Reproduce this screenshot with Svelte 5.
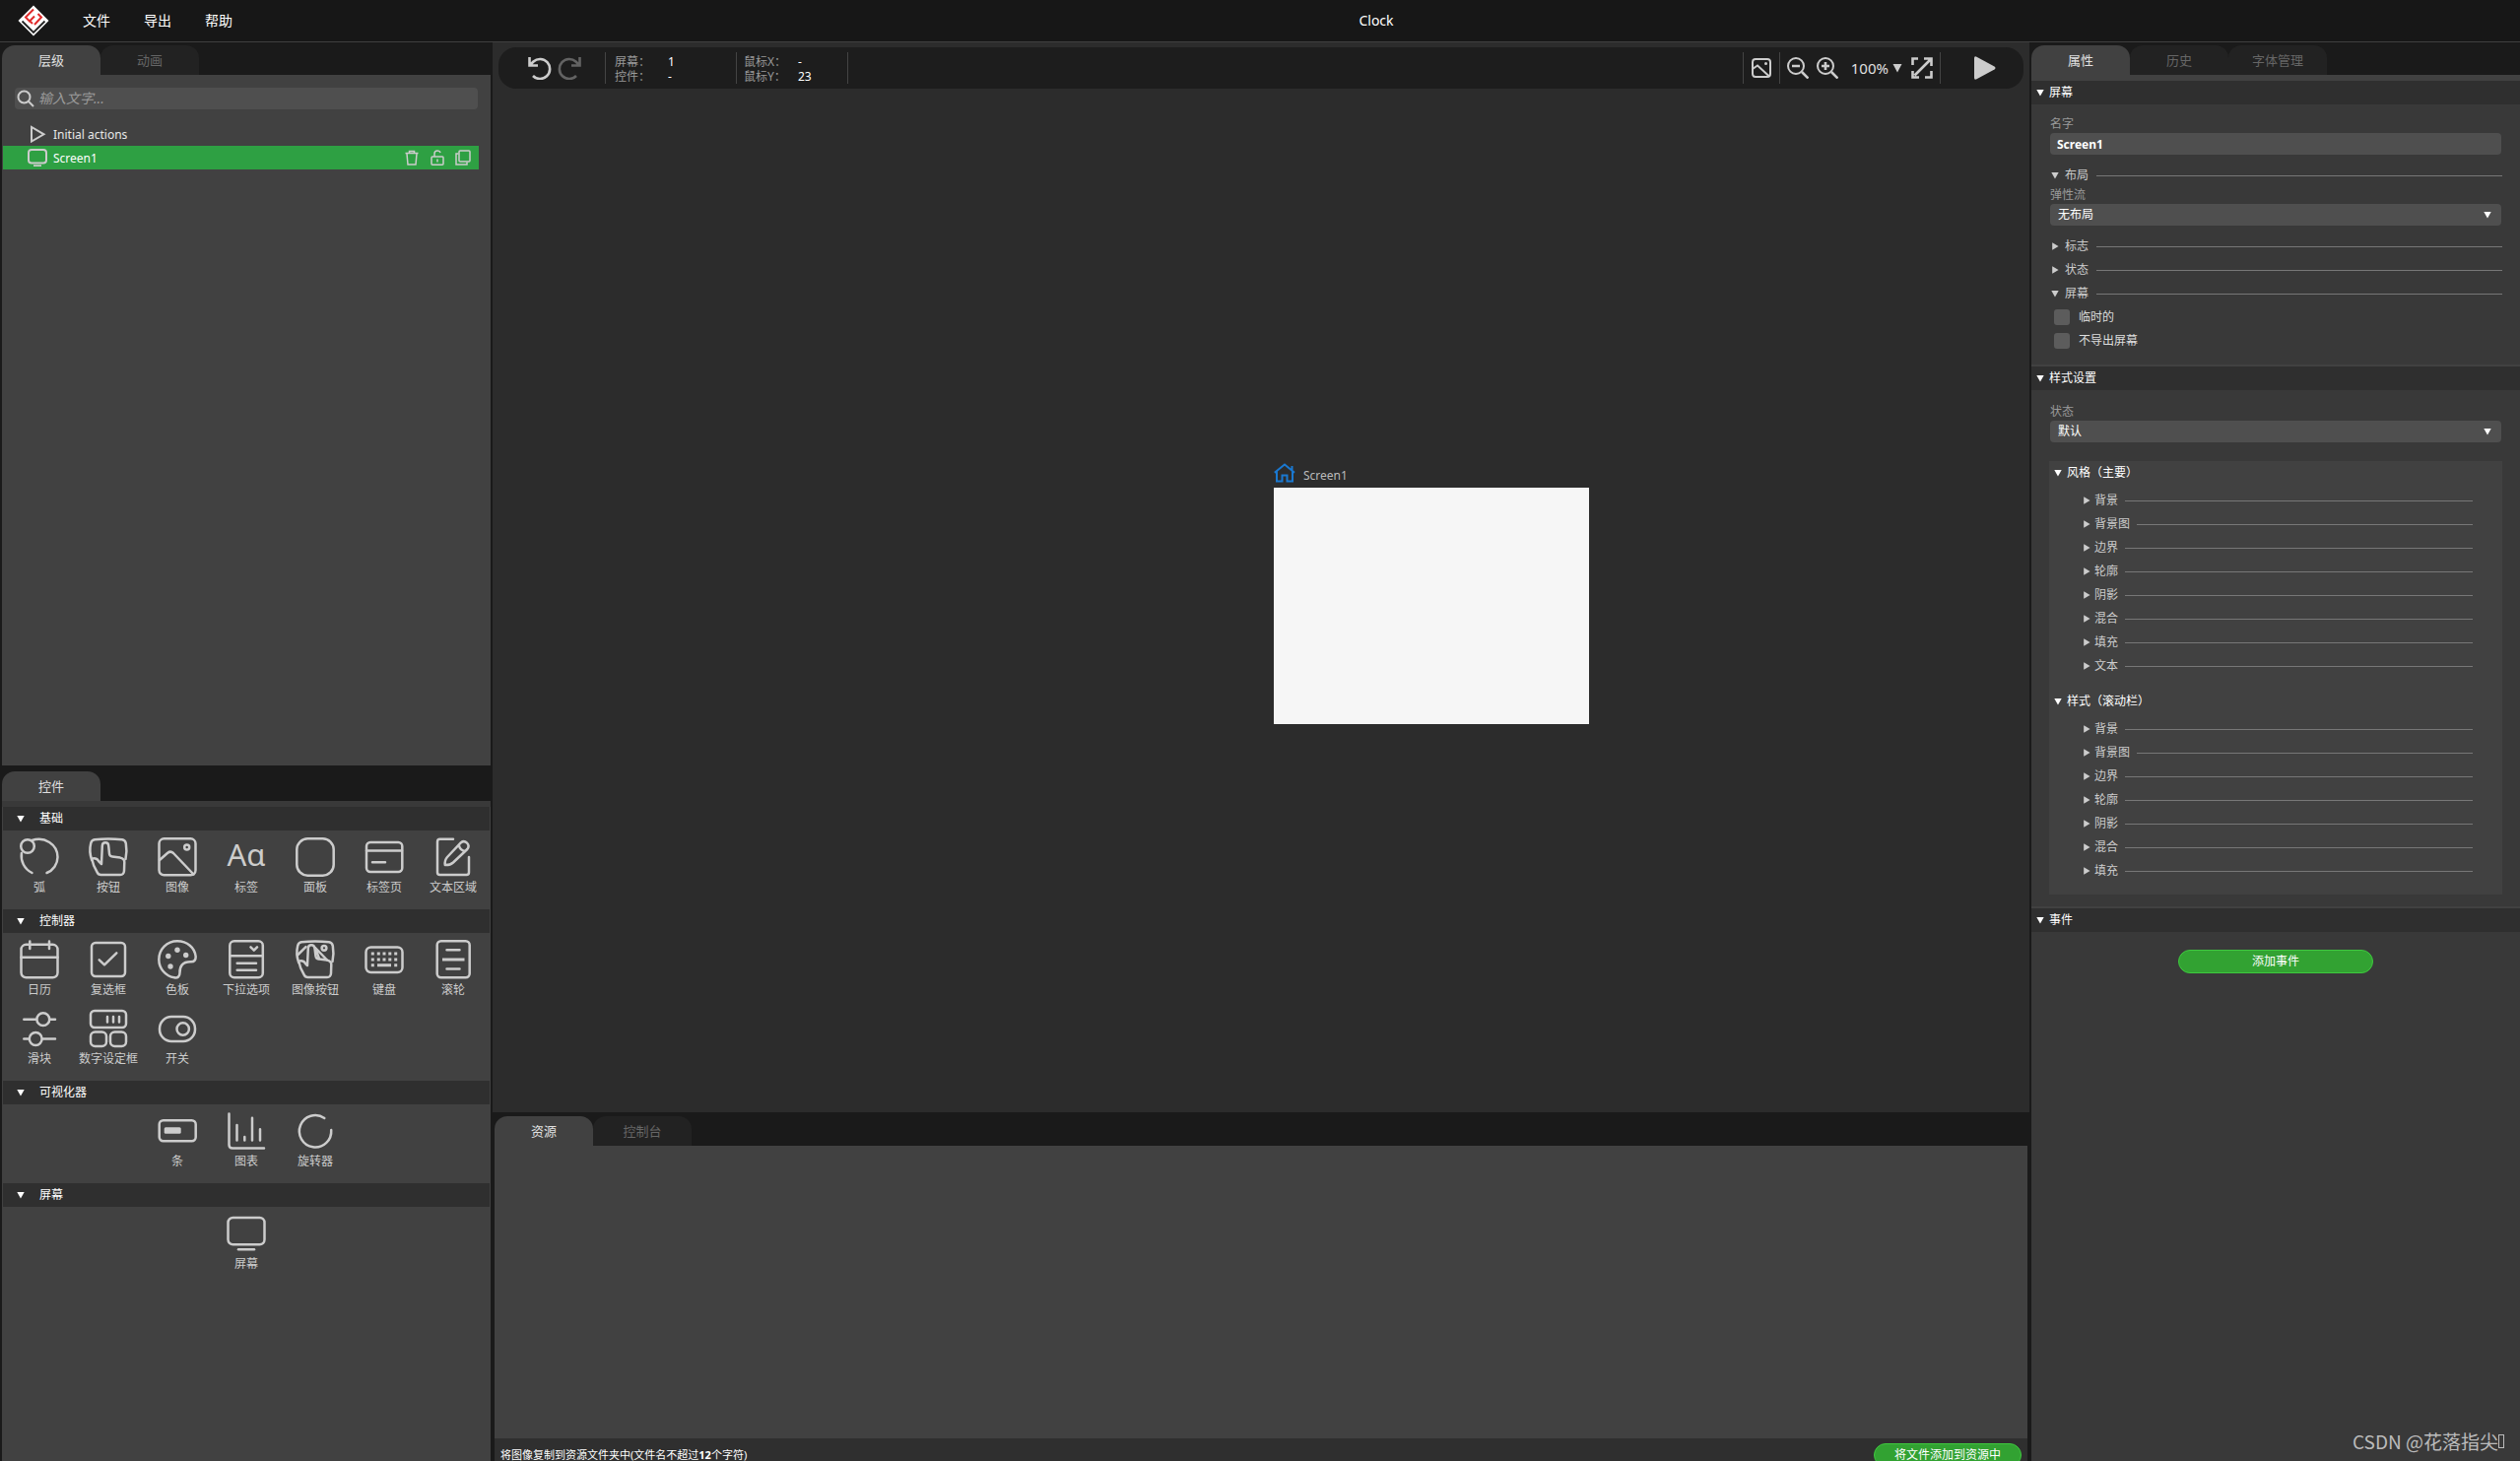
<script lang="ts">
	type Widget = { icon: string; label: string };
	type Group = { title: string; widgets: Widget[] };

	const menus = ['文件', '导出', '帮助'];

	const groups: Group[] = [
		{
			title: '基础',
			widgets: [
				{ icon: 'arc', label: '弧' },
				{ icon: 'button', label: '按钮' },
				{ icon: 'image', label: '图像' },
				{ icon: 'label', label: '标签' },
				{ icon: 'panel', label: '面板' },
				{ icon: 'tabview', label: '标签页' },
				{ icon: 'textarea', label: '文本区域' }
			]
		},
		{
			title: '控制器',
			widgets: [
				{ icon: 'calendar', label: '日历' },
				{ icon: 'checkbox', label: '复选框' },
				{ icon: 'palette', label: '色板' },
				{ icon: 'dropdown', label: '下拉选项' },
				{ icon: 'imgbutton', label: '图像按钮' },
				{ icon: 'keyboard', label: '键盘' },
				{ icon: 'roller', label: '滚轮' },
				{ icon: 'slider', label: '滑块' },
				{ icon: 'spinbox', label: '数字设定框' },
				{ icon: 'switch', label: '开关' }
			]
		},
		{
			title: '可视化器',
			widgets: [
				{ icon: 'bar', label: '条' },
				{ icon: 'chart', label: '图表' },
				{ icon: 'spinner', label: '旋转器' }
			]
		},
		{ title: '屏幕', widgets: [{ icon: 'screen', label: '屏幕' }] }
	];

	const styleGroups = [
		{ title: '风格（主要）', items: ['背景', '背景图', '边界', '轮廓', '阴影', '混合', '填充', '文本'] },
		{ title: '样式（滚动栏）', items: ['背景', '背景图', '边界', '轮廓', '阴影', '混合', '填充'] }
	];

	let search = $state('');
	let screenName = $state('Screen1');
	let layout = $state('none');
	let styleState = $state('default');
	let temporary = $state(false);
	let noExport = $state(false);
</script>

{#snippet tri(open: boolean)}
	<svg class="tri" viewBox="0 0 8 8" width="8" height="8">
		{#if open}
			<path fill="currentColor" d="M0.3 1h7.4L4 7.6z" />
		{:else}
			<path fill="currentColor" d="M1.2 0.2v7.6L7.6 4z" />
		{/if}
	</svg>
{/snippet}

{#snippet section(title: string)}
	<button class="section-head">{@render tri(true)}<span>{title}</span></button>
{/snippet}

{#snippet sub(title: string, open: boolean)}
	<button class="sub-head">{@render tri(open)}<span>{title}</span><i class="rule"></i></button>
{/snippet}

{#snippet widgetIcon(name: string)}
	<svg class="widget-icon" viewBox="0 0 40 40" width="40" height="40">
		{#if name === 'arc'}
			<circle cx="8" cy="9" r="6.8" />
			<path d="M1.9 16C.8 24 4.500 32 12.500 36M12.500 3C25 -1.500 38.500 7 38.500 20C38.500 27 34 33.500 27.500 36" />
		{:else if name === 'button'}
			<path d="M3.200 23C1 17 1.200 10 2.200 6Q3 2.800 6 2.300Q20 .6 34 2.300Q37 2.800 37.800 6Q39.200 14 37.500 22" />
			<path d="M3.200 21.600Q8 20.500 10 24L13 27L13.800 8.500Q14 5.200 17 5.200Q20 5.200 20.200 8.500L21 16.500Q21.300 19.300 24 19.500L32 20.600Q36.300 21.500 36.300 25L36 34Q35.700 38 32 38H12.500Q9.800 38 8.700 35.500Q4.500 29 3.200 21.600Z" />
		{:else if name === 'image'}
			<rect x="1.500" y="1.300" width="37" height="37" rx="5" />
			<path d="M2 23L10.200 15.800Q13.200 13.400 16 16L36.500 37.500" />
			<circle cx="29.700" cy="10" r="2.500" />
		{:else if name === 'label'}
			<text x="20" y="29" text-anchor="middle">Aɑ</text>
		{:else if name === 'panel'}
			<rect x="1.300" y="1.300" width="37.400" height="37.400" rx="11" />
		{:else if name === 'tabview'}
			<rect x="2" y="5" width="36.300" height="30" rx="4" />
			<path d="M2 13.500H38M8 25.300H21" />
		{:else if name === 'textarea'}
			<path d="M20 1.800H6.500Q4 1.800 4 4.500V35.500Q4 38 6.500 38H33.500Q36 38 36 35.500V20" />
			<path d="M11.800 28Q11 23.500 14 20L28 5.200Q31 2.800 34 5.700Q37 8.700 34.300 12L20 25.500Q17 28.200 11.800 28ZM26 8.500Q27 13 32 14" />
		{:else if name === 'calendar'}
			<rect x="1.500" y="4.800" width="37" height="33.500" rx="5" />
			<path d="M1.500 17.700H38.500M10.300 1.500V9M30 1.500V9" />
		{:else if name === 'checkbox'}
			<rect x="3" y="3" width="34" height="34" rx="4" />
			<path d="M10.700 20.300L16 25.300L28.300 13.300" />
		{:else if name === 'palette'}
			<path d="M38.700 17C38.700 20.500 37 22.300 34 22.300C25 22 22.300 27 22.500 33.500C22.500 37 20.500 39 17 38.300C8 37 1.300 29 1.300 20C1.300 9.500 9.500 1.300 20 1.300C30 1.300 37.800 8 38.700 17Z" />
			<g class="dots">
				<circle cx="20" cy="10.300" r="2.700" />
				<circle cx="10.800" cy="16.500" r="2.700" />
				<circle cx="28.700" cy="15.500" r="2.700" />
				<circle cx="13" cy="27" r="2.700" />
			</g>
		{:else if name === 'dropdown'}
			<rect x="3.300" y="1.300" width="33.500" height="37" rx="4.500" />
			<path d="M3.300 16.200H36.700M24.500 7.300L27.800 10.700L31 7.300M10.700 23.800H30M10.700 30.800H30" />
		{:else if name === 'imgbutton'}
			<path d="M3.200 23C1 17 1.200 10 2.200 6Q3 2.800 6 2.300Q20 .6 34 2.300Q37 2.800 37.800 6Q39.200 14 37.500 22" />
			<path d="M3.200 21.600Q8 20.500 10 24L12 26L12.800 8.500Q13 5.200 16 5.200Q19 5.200 19.500 8.500L20.500 16.500Q21 19.300 24 19.500L32 20.600Q36.300 21.500 36.300 25L36 34Q35.700 38 32 38H12.500Q9.800 38 8.700 35.500Q4.500 29 3.200 21.600Z" />
			<path d="M2.500 15L10.500 7.200M20 8L32 20.500M21 11L24 19" />
			<circle cx="29" cy="8.300" r="2.400" />
		{:else if name === 'keyboard'}
			<rect x="1.500" y="7.500" width="37" height="25.500" rx="5" />
			<path class="keys" d="M6.800 14h3M12.800 14h3M18.500 14h3M24.300 14h3M30.200 14h3M6.800 20h3M12.800 20h3M18.500 20h3M24.300 20h3M30.200 20h3M6.800 25.800h3M13 25.800h14M30.200 25.800h3" />
		{:else if name === 'roller'}
			<rect x="3.700" y="1.300" width="33" height="37" rx="4" />
			<path d="M13.500 10.300H26.500M13.500 29.500H26.500" />
			<path class="keys" d="M9 20H31.500" />
		{:else if name === 'slider'}
			<path d="M4.300 10.700H17M30.500 10.700H36M4.300 30.500H9.500M23 30.500H36" />
			<circle cx="23.800" cy="10.700" r="6.400" />
			<circle cx="16.200" cy="30.500" r="6.400" />
		{:else if name === 'spinbox'}
			<rect x="2" y="2" width="36" height="17" rx="4" />
			<rect x="2" y="23.500" width="16" height="14.500" rx="4.500" />
			<rect x="22" y="23.500" width="16" height="14.500" rx="4.500" />
			<path d="M19 8V13.500M25 8V13.500M31 8V13.500" />
		{:else if name === 'switch'}
			<rect x="2" y="8" width="36" height="25" rx="12" />
			<circle cx="25.700" cy="20.500" r="6.200" />
		{:else if name === 'bar'}
			<rect x="1.700" y="9.300" width="37" height="21" rx="4" />
			<rect class="solid" x="6.700" y="16.300" width="17" height="6.500" rx="1.500" />
		{:else if name === 'chart'}
			<path d="M2.500 2.500V34Q2.500 37.500 6 37.500H38M10.500 14V29.500M18.300 26V29.500M26 6.700V29.500M34 18.300V29.500" />
		{:else if name === 'spinner'}
			<path d="M29.300 7A16.200 16.200 0 1 0 36.200 19" />
		{:else}
			<rect x="1.500" y="4" width="37" height="27.300" rx="5" />
			<path d="M12 36.300H28" />
		{/if}
	</svg>
{/snippet}

<div class="app">
	<header class="menubar">
		<svg class="logo" viewBox="0 0 32 32" width="32" height="32">
			<path fill="#ffffff" d="M16 .5L31.500 16L16 31.500L.5 16Z" />
			<path fill="none" stroke="#222222" stroke-width="1.800" d="M4.500 16.500L16 28L27.500 16.500" />
			<path fill="none" stroke="#e02a2a" stroke-width="2" d="M16 4.500L8 12.500L12 16.500L17 11.500M12.500 16.500L15 19M20.500 9L24 12.500L17 20" />
		</svg>
		<nav>
			{#each menus as menu}
				<button class="menu">{menu}</button>
			{/each}
		</nav>
		<div class="title">Clock</div>
	</header>

	<div class="workspace">
		<aside class="left">
			<div class="tabs">
				<button class="tab active">层级</button>
				<button class="tab">动画</button>
			</div>
			<div class="hierarchy">
				<div class="search">
					<svg viewBox="0 0 18 18" width="18" height="18">
						<circle cx="7.500" cy="7.500" r="6" />
						<path d="M12 12L17 17" />
					</svg>
					<input type="text" aria-label="输入文字" placeholder="输入文字..." bind:value={search} />
				</div>
				<div class="tree">
					<button class="node">
						<svg viewBox="0 0 20 18" width="20" height="18"><path d="M4 2V16.500L16.500 9.300Z" /></svg>
						<span>Initial actions</span>
					</button>
					<div class="node selected">
						<svg viewBox="0 0 20 18" width="20" height="18">
							<rect x="1" y="1" width="18" height="13.500" rx="3" />
							<path d="M6 17.300H14" />
						</svg>
						<span>Screen1</span>
						<button class="node-btn" title="Delete">
							<svg viewBox="0 0 16 16" width="16" height="16"><path d="M1.500 3.500H14.500M5.500 3V1.500H10.500V3M3 4L4 15H12L13 4" /></svg>
						</button>
						<button class="node-btn" title="Lock">
							<svg viewBox="0 0 16 16" width="16" height="16">
								<rect x="2" y="7" width="12" height="8.200" rx="1" />
								<path d="M5 7V4Q5 1 8 1Q10.500 1 11 3M8 9.500V12.500" />
							</svg>
						</button>
						<button class="node-btn" title="Duplicate">
							<svg viewBox="0 0 16 16" width="16" height="16">
								<rect x="4" y="1" width="11" height="11" rx="1" />
								<path d="M3.500 4H1V15H12V12.500" />
							</svg>
						</button>
					</div>
				</div>
			</div>

			<div class="tabs widget-tabs">
				<button class="tab active">控件</button>
			</div>
			<div class="widgets">
				{#each groups as group}
					{@render section(group.title)}
					<div class="widget-grid">
						{#each group.widgets as widget}
							<button class="widget">
								{@render widgetIcon(widget.icon)}
								<span>{widget.label}</span>
							</button>
						{/each}
					</div>
				{/each}
			</div>
		</aside>

		<main class="center">
			<div class="canvas">
				<div class="toolbar">
					<button class="tool" title="Undo">
						<svg viewBox="0 0 24 24" width="24" height="24"><path class="thick" d="M1.500 1V9.500H10M2 9L5.500 5.500A10 10 0 1 1 5 20" /></svg>
					</button>
					<button class="tool dim" title="Redo">
						<svg viewBox="0 0 24 24" width="24" height="24"><path class="thick" d="M22.500 1V9.500H14M22 9L18.500 5.500A10 10 0 1 0 19 20" /></svg>
					</button>
					<dl class="info">
						<dt>屏幕：</dt><dd>1</dd>
						<dt>控件：</dt><dd>-</dd>
					</dl>
					<dl class="info mouse">
						<dt>鼠标X：</dt><dd>-</dd>
						<dt>鼠标Y：</dt><dd>23</dd>
					</dl>
					<div class="spacer"></div>
					<div class="cell">
						<button class="tool" title="Screenshot">
							<svg viewBox="0 0 20 20" width="20" height="20">
								<rect x="1" y="1" width="18" height="18" rx="3" />
								<path d="M1 11L6 7.500L18 18.500" />
								<circle class="fill" cx="14.500" cy="5.500" r="1.500" />
							</svg>
						</button>
					</div>
					<div class="cell zoom">
						<button class="tool" title="Zoom out">
							<svg viewBox="0 0 22 22" width="22" height="22">
								<circle cx="9" cy="9" r="8" /><path class="thick" d="M5 9H13M15 15L21.500 21.500" />
							</svg>
						</button>
						<button class="tool" title="Zoom in">
							<svg viewBox="0 0 22 22" width="22" height="22">
								<circle cx="9" cy="9" r="8" /><path class="thick" d="M5 9H13M9 5V13M15 15L21.500 21.500" />
							</svg>
						</button>
						<button class="zoom-level">100%
							<svg viewBox="0 0 10 10" width="10" height="10"><path class="fill" d="M.5 1H9.500L5 9.500Z" /></svg>
						</button>
						<button class="tool" title="Fit">
							<svg viewBox="0 0 22 22" width="22" height="22">
								<path class="thick" d="M1.500 8V1.500H7M1.500 14V20.500H8M14 20.500H20.500V14M13 1.500H20.500V9M3.500 18.500L20 2" />
							</svg>
						</button>
					</div>
					<div class="cell play">
						<button class="tool" title="Play">
							<svg viewBox="0 0 22 24" width="22" height="24"><path class="fill" d="M0 2Q0 -.5 2.500 .7L20.500 10.500Q22.500 12 20.500 13.500L2.500 23.300Q0 24.500 0 22Z" /></svg>
						</button>
					</div>
				</div>
				<div class="screen">
					<div class="screen-name">
						<svg viewBox="0 0 22 20" width="22" height="20">
							<path d="M.8 9.800L11 1.500L21 9.800M3 8.500V18.500H8.500V12.500H13.500V18.500H19V8.500M18.500 7V3" />
						</svg>
						<span>Screen1</span>
					</div>
					<div class="screen-body"></div>
				</div>
			</div>

			<div class="assets">
				<div class="tabs">
					<button class="tab active">资源</button>
					<button class="tab">控制台</button>
				</div>
				<div class="asset-list"></div>
				<footer>
					<p>将图像复制到资源文件夹中(文件名不超过<b>12</b>个字符)</p>
					<button class="green add-file">将文件添加到资源中</button>
				</footer>
			</div>
		</main>

		<aside class="right">
			<div class="tabs">
				<button class="tab active">属性</button>
				<button class="tab">历史</button>
				<button class="tab">字体管理</button>
			</div>
			<div class="inspector">
				{@render section('屏幕')}
				<div class="section-body">
					<label class="field">
						<span>名字</span>
						<input type="text" bind:value={screenName} />
					</label>
					<div class="subs">
						{@render sub('布局', true)}
						<label class="field flow">
							<span>弹性流</span>
							<span class="select">
								<select bind:value={layout}><option value="none">无布局</option></select>
								{@render tri(true)}
							</span>
						</label>
						{@render sub('标志', false)}
						{@render sub('状态', false)}
						{@render sub('屏幕', true)}
						<label class="check"><input type="checkbox" bind:checked={temporary} />临时的</label>
						<label class="check"><input type="checkbox" bind:checked={noExport} />不导出屏幕</label>
					</div>
				</div>

				{@render section('样式设置')}
				<div class="section-body style-settings">
					<label class="field">
						<span>状态</span>
						<span class="select">
							<select bind:value={styleState}><option value="default">默认</option></select>
							{@render tri(true)}
						</span>
					</label>
					<div class="styles">
						{#each styleGroups as group}
							<div class="style-group">
								<button class="style-head">{@render tri(true)}<span>{group.title}</span></button>
								{#each group.items as item}
									{@render sub(item, false)}
								{/each}
							</div>
						{/each}
					</div>
				</div>

				{@render section('事件')}
				<div class="section-body events">
					<button class="green">添加事件</button>
				</div>
			</div>
			<div class="watermark">CSDN @花落指尖<i class="no-glyph"></i></div>
		</aside>
	</div>
</div>

<style>
	:global(body) {
		margin: 0;
		background: #1a1a1a;
	}

	.app {
		--dark: #1a1a1a;
		--pane: #414141;
		--pane-2: #393939;
		--head: #2f2f2f;
		--field: #4f4f4f;
		--line: #404040;
		--icon: #cccccc;
		display: flex;
		flex-direction: column;
		height: 100vh;
		overflow: hidden;
		font-family: 'Noto Sans', 'Noto Sans CJK SC', sans-serif;
		font-size: 12px;
		line-height: 16px;
		color: #ffffff;
	}

	button,
	input,
	select {
		font: inherit;
		color: inherit;
		background: none;
		border: none;
		padding: 0;
		margin: 0;
		outline: none;
		box-sizing: border-box;
	}

	svg {
		flex-shrink: 0;
		fill: none;
		stroke: var(--icon);
		stroke-width: 2;
	}

	.tri {
		stroke: none;
	}

	/* Menu bar */
	.menubar {
		display: flex;
		align-items: center;
		height: 42px;
		flex-shrink: 0;
		padding-left: 18px;
		background: #171717;
		border-bottom: 1px solid var(--line);
		font-size: 14px;
		line-height: 20px;
	}

	.logo {
		stroke: none;
	}

	nav {
		display: flex;
		gap: 34px;
		padding-left: 34px;
	}

	.title {
		flex: 1;
		text-align: center;
		font-size: 14px;
	}

	.workspace {
		flex: 1;
		min-height: 0;
		display: grid;
		grid-template-columns: 500px minmax(0, 1fr) 498px;
	}

	/* Tabs */
	.tabs {
		display: flex;
		height: 30px;
		flex-shrink: 0;
		padding-top: 3px;
		background: var(--dark);
	}

	.tab {
		width: 100px;
		height: 30px;
		border-radius: 13px 13px 0 0;
		background: #222222;
		color: #666666;
		font-size: 13px;
	}

	.tab.active {
		background: var(--pane);
		color: #e0e0e0;
	}

	/* Left column */
	.left {
		display: flex;
		flex-direction: column;
		min-height: 0;
		border: solid var(--dark);
		border-width: 0 2px;
		background: var(--pane);
	}

	.hierarchy {
		flex: 688 1 0;
		min-height: 0;
		padding-top: 13px;
		box-sizing: border-box;
	}

	.search {
		display: flex;
		align-items: center;
		gap: 4px;
		height: 22px;
		margin: 0 13px;
		padding-left: 2px;
		border-radius: 4px;
		background: var(--field);
	}

	.search input {
		flex: 1;
		font-size: 14px;
		font-style: italic;
	}

	.search input::placeholder {
		color: #999999;
		opacity: 1;
	}

	.tree {
		padding: 13px 12px 0 1px;
	}

	.node {
		display: flex;
		align-items: center;
		gap: 6px;
		width: 100%;
		height: 24px;
		padding: 0 8px 0 25px;
		box-sizing: border-box;
		text-align: left;
		color: #e8e8e8;
	}

	.node.selected {
		background: #2ea043;
		color: #ffffff;
	}

	.node span {
		flex: 1;
		line-height: 18px;
		padding-top: 2px;
	}

	.node-btn {
		height: 16px;
		margin-left: 4px;
	}

	.node-btn svg {
		display: block;
		stroke-width: 1.5;
	}

	.widget-tabs {
		padding-top: 6px;
	}

	.widgets {
		flex: 664 1 0;
		min-height: 0;
		border-top: 6px solid var(--pane-2);
		box-sizing: border-box;
		padding: 0 1px;
	}

	.section-head {
		display: flex;
		align-items: center;
		width: 100%;
		height: 24px;
		padding-left: 5px;
		gap: 5px;
		background: var(--head);
	}

	.widgets .section-head {
		padding-left: 14px;
		gap: 15px;
	}

	.widget-grid {
		display: grid;
		grid-template-columns: repeat(auto-fit, 70px);
		justify-content: center;
		padding: 5px 0;
	}

	.widget {
		display: flex;
		flex-direction: column;
		align-items: center;
		gap: 3px;
		height: 70px;
		padding-top: 2px;
		color: var(--icon);
		white-space: nowrap;
	}

	.widget-icon {
		overflow: visible;
		stroke-width: 2.5;
		stroke-linecap: round;
		stroke-linejoin: round;
	}

	.widget-icon text {
		font-size: 31px;
		line-height: 40px;
		fill: var(--icon);
		stroke: none;
	}

	.widget-icon .solid,
	.widget-icon .dots {
		fill: var(--icon);
		stroke: none;
	}

	.widget-icon .keys {
		stroke-width: 3;
		stroke-linecap: butt;
	}

	/* Canvas */
	.center {
		display: flex;
		flex-direction: column;
		min-height: 0;
	}

	.canvas {
		position: relative;
		flex: 1;
		padding: 5px 6px;
		background: #2c2c2c;
	}

	.toolbar {
		display: flex;
		align-items: center;
		height: 42px;
		padding-left: 30px;
		border-radius: 18px;
		background: #1d1d1d;
	}

	.tool {
		display: flex;
		align-items: center;
	}

	.tool + .tool.dim {
		margin-left: 6px;
		opacity: 0.4;
	}

	.tool .thick {
		stroke-width: 2.6;
	}

	.toolbar .fill {
		fill: var(--icon);
		stroke: none;
	}

	.info {
		display: grid;
		grid-template-columns: 54px 1fr;
		grid-auto-rows: 15px;
		width: 133px;
		height: 32px;
		margin: 0;
		padding: 2px 0 0 9px;
		box-sizing: border-box;
		border-left: 1px solid #444444;
		font-size: 12px;
		line-height: 16px;
	}

	.tool + .info {
		margin-left: 24px;
	}

	.info.mouse {
		grid-template-columns: 55px 1fr;
		width: 114px;
		padding-left: 7px;
		border-right: 1px solid #444444;
	}

	.info dt {
		color: #999999;
		white-space: nowrap;
	}

	.info dd {
		margin: 0;
	}

	.spacer {
		flex: 1;
	}

	.cell {
		display: flex;
		align-items: center;
		gap: 8px;
		height: 32px;
		padding: 0 8px;
		border-left: 1px solid #444444;
	}

	.cell.zoom {
		padding: 0 7px;
	}

	.zoom-level {
		display: flex;
		align-items: center;
		gap: 4px;
		padding: 0 1px 0 5px;
		font-size: 15px;
		color: #e0e0e0;
	}

	.cell.play {
		padding: 0 28px 0 34px;
	}

	.screen {
		position: absolute;
		left: 793px;
		top: 427px;
	}

	.screen-name {
		display: flex;
		align-items: flex-start;
		gap: 8px;
		height: 25px;
		line-height: 26px;
		color: #bbbbbb;
	}

	.screen-name svg {
		stroke: #1a78d0;
	}

	.screen-body {
		width: 320px;
		height: 240px;
		background: #f6f6f6;
	}

	/* Assets */
	.assets {
		display: flex;
		flex-direction: column;
		padding: 0 2px;
		background: var(--dark);
	}

	.assets .tabs {
		padding-top: 4px;
	}

	.asset-list {
		height: 297px;
		background: var(--pane);
	}

	footer {
		display: flex;
		justify-content: space-between;
		height: 18px;
		padding: 5px 6px 0;
		overflow: hidden;
		background: var(--head);
	}

	footer p {
		margin: 0;
		font-size: 11px;
		line-height: 24px;
	}

	.green {
		width: 198px;
		height: 24px;
		flex-shrink: 0;
		border: 1px solid #3fc83f;
		border-radius: 12px;
		background: #32a232;
	}

	.add-file {
		width: 150px;
	}

	/* Inspector */
	.right {
		position: relative;
		border-left: 2px solid var(--dark);
		background: var(--pane-2);
		min-height: 0;
	}

	.inspector {
		border-top: 6px solid var(--pane);
	}

	.section-body {
		padding: 12px 18px;
	}

	.section-body + .section-head {
		height: 26px;
		border-top: 2px solid var(--pane);
	}

	.style-settings {
		padding-top: 14px;
	}

	.field {
		display: block;
		padding-left: 1px;
		padding-right: 1px;
	}

	.field > span:first-child {
		display: block;
		color: #999999;
	}

	.field input,
	.select {
		display: flex;
		align-items: center;
		width: 100%;
		height: 22px;
		margin-top: 1px;
		border-radius: 4px;
		background: var(--field);
	}

	.field input {
		padding: 0 7px;
		font-weight: 700;
	}

	.select {
		box-sizing: border-box;
		padding-right: 10px;
	}

	.select select {
		flex: 1;
		appearance: none;
		padding-left: 8px;
	}

	.subs {
		padding-top: 9px;
	}

	.flow {
		padding-bottom: 9px;
	}

	.sub-head {
		display: flex;
		align-items: center;
		gap: 6px;
		width: 100%;
		height: 24px;
		padding-left: 2px;
		color: var(--icon);
	}

	.rule {
		flex: 1;
		height: 1px;
		margin-left: 2px;
		background: #777777;
	}

	.check {
		display: flex;
		align-items: center;
		gap: 9px;
		height: 24px;
		padding-left: 5px;
		color: #dddddd;
	}

	.check input {
		appearance: none;
		width: 16px;
		height: 16px;
		border-radius: 3px;
		background: #5c5c5c;
	}

	.check input:checked {
		background: #2ea043;
	}

	.styles {
		margin-top: 19px;
		background: var(--pane);
	}

	.style-group {
		padding: 0 30px 12px 34px;
	}

	.style-group .sub-head {
		padding-left: 0;
		gap: 4px;
	}

	.style-group .rule {
		margin-left: 3px;
	}

	.style-head {
		display: flex;
		align-items: center;
		gap: 5px;
		height: 24px;
		margin: 0 0 4px -29px;
	}

	.events {
		display: flex;
		justify-content: center;
		padding-top: 18px;
	}

	.watermark {
		position: absolute;
		right: 16px;
		bottom: 8px;
		display: flex;
		align-items: center;
		font-family: 'Noto Sans CJK SC', sans-serif;
		font-size: 19px;
		line-height: 24px;
		color: #bbbbbb;
	}

	.no-glyph {
		width: 4px;
		height: 12px;
		border: 1px solid #bbbbbb;
	}
</style>
